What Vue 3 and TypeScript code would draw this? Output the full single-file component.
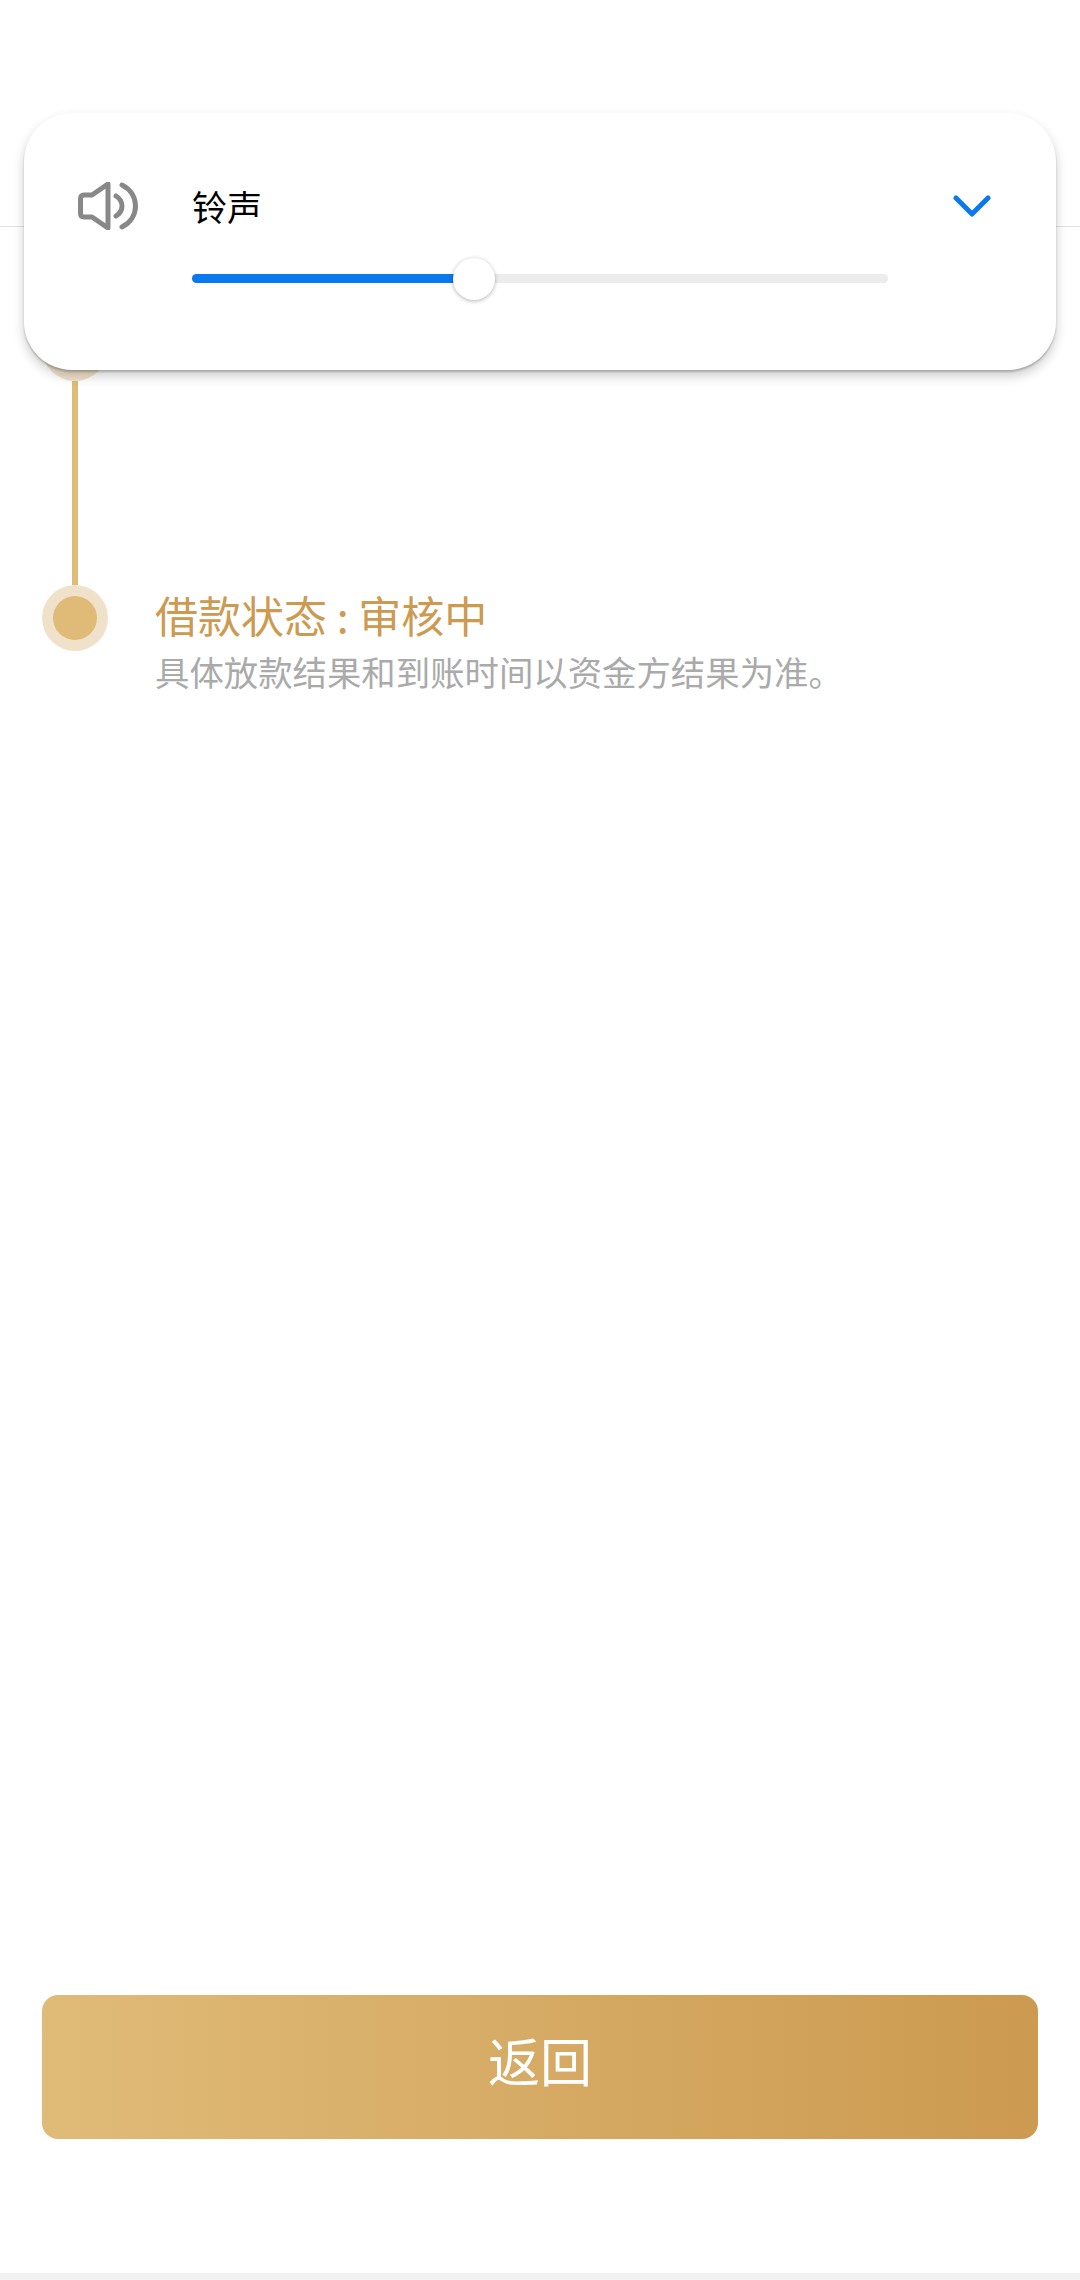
<script setup lang="ts">
const volume = 40.5
const steps = [
  { id: 1, title: '', desc: '', last: false },
  { id: 2, title: '借款状态 : 审核中', desc: '具体放款结果和到账时间以资金方结果为准。', last: true },
]
</script>

<template>
  <div class="page">
    <header class="header"></header>

    <main class="main">
      <ol class="timeline">
        <li v-for="step in steps" :key="step.id" class="step">
          <div class="rail">
            <span class="dot"><span class="dot-core"></span></span>
            <span v-if="!step.last" class="connector"></span>
          </div>
          <div v-if="step.title" class="step-body">
            <p class="step-title">{{ step.title }}</p>
            <p class="step-desc">{{ step.desc }}</p>
          </div>
        </li>
      </ol>
      <button class="back" type="button">返回</button>
    </main>

    <div class="bottom-strip"></div>

    <section class="volume-panel">
      <svg class="speaker" viewBox="0 0 62 48" width="62" height="48" fill="none" stroke="#888888" stroke-width="5" stroke-linecap="round" stroke-linejoin="round">
        <path d="M30 2 L14 13 H6 Q2.5 13 2.5 17 V31 Q2.5 35 6 35 H14 L30 46 Z" />
        <path d="M38 14 C46 19 46 29 38 34" />
        <path d="M44 3 C62 12 62 36 44 45" />
      </svg>
      <div class="volume-main">
        <div class="volume-label">铃声</div>
        <div class="track">
          <div class="fill" :style="{ width: volume + '%' }"></div>
          <div class="thumb" :style="{ left: volume + '%' }"></div>
        </div>
      </div>
      <svg class="chevron" viewBox="0 0 38 22" width="38" height="22" fill="none" stroke="#0a78ee" stroke-width="5" stroke-linecap="round" stroke-linejoin="round">
        <path d="M3 3 L19 19 L35 3" />
      </svg>
    </section>
  </div>
</template>

<style>
html, body { margin: 0; background: #ffffff; }
</style>

<style scoped>
.page {
  position: relative;
  width: 1080px;
  height: 2280px;
  display: flex;
  flex-direction: column;
  background: #ffffff;
  font-family: "Noto Sans CJK SC", "Noto Sans", sans-serif;
  overflow: hidden;
}
.header {
  height: 226px;
  flex: none;
  border-bottom: 1px solid #e2e2e2;
}
.main {
  flex: 1;
  display: flex;
  flex-direction: column;
}
.timeline {
  list-style: none;
  margin: 88px 0 0;
  padding: 0 0 0 42px;
}
.step {
  display: flex;
  gap: 48px;
}
.rail {
  width: 65px;
  flex: none;
  display: flex;
  flex-direction: column;
  align-items: center;
}
.dot {
  width: 66px;
  height: 66px;
  border-radius: 50%;
  background: #f0e2ca;
  display: flex;
  align-items: center;
  justify-content: center;
}
.dot-core {
  width: 44px;
  height: 44px;
  border-radius: 50%;
  background: #e0bb78;
}
.connector {
  width: 6px;
  height: 204px;
  background: #dfbb7a;
}
.step-body {
  padding-top: 4px;
}
.step-title {
  margin: 0;
  font-size: 43px;
  line-height: 50px;
  color: #cc9a50;
}
.step-desc {
  margin: 8px 0 0;
  font-size: 34.4px;
  line-height: 48px;
  color: #aaaaaa;
}
.back {
  margin: auto 42px 134px;
  height: 144px;
  flex: none;
  border: 0;
  border-radius: 16px;
  background: linear-gradient(90deg, #e0bb78, #cc9a50);
  color: #ffffff;
  font-family: inherit;
  font-size: 52px;
  line-height: 130px;
  padding: 0 0 14px;
}
.bottom-strip {
  height: 7px;
  flex: none;
  background: #f2f2f2;
}
.volume-panel {
  position: absolute;
  left: 24px;
  top: 113px;
  width: 1032px;
  height: 257px;
  box-sizing: border-box;
  padding: 69px 65px 0 54px;
  border-radius: 48px;
  background: #ffffff;
  box-shadow: 0 2px 2px rgba(0, 0, 0, 0.2), 0 6px 12px rgba(0, 0, 0, 0.2);
  display: flex;
  align-items: flex-start;
}
.speaker {
  flex: none;
  margin-right: 52px;
}
.volume-main {
  width: 696px;
  flex: none;
}
.volume-label {
  font-size: 35px;
  line-height: 48px;
  color: #000000;
}
.track {
  position: relative;
  height: 9px;
  margin-top: 44px;
  border-radius: 5px;
  background: #ececec;
}
.fill {
  height: 100%;
  border-radius: 5px;
  background: #0a78ee;
}
.thumb {
  position: absolute;
  top: 50%;
  width: 42px;
  height: 42px;
  border-radius: 50%;
  background: #ffffff;
  box-shadow: 0 1px 4px rgba(0, 0, 0, 0.3);
  transform: translate(-50%, -50%);
}
.chevron {
  flex: none;
  margin-left: 65px;
  margin-top: 13px;
}
</style>
